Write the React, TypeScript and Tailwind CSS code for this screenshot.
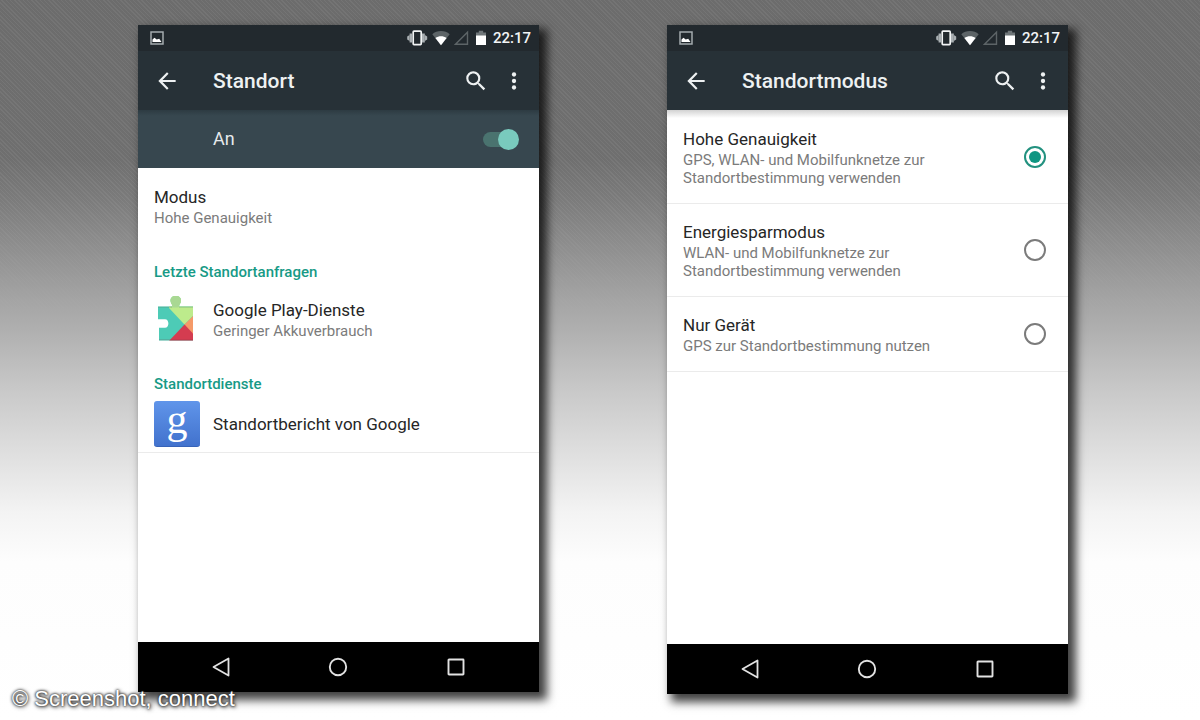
import { useState, type ReactNode } from "react";

function VibrateIcon() {
  return (
    <svg viewBox="0 0 21 16" className="h-4 w-[21px]" aria-hidden="true">
      <rect x="6.2" y="1.2" width="8" height="13.4" rx="0.8" fill="none" stroke="#f2f4f5" strokeWidth="1.700" />
      <path d="M2.600 3.600h2.800v8.800H2.600zM15 3.600h2.800v8.800H15z" fill="#aab0b3" />
      <path d="M.2 6.600 2.600 5v6L.2 9.400zM20.200 6.600 17.800 5v6l2.400-1.600z" fill="#aab0b3" />
    </svg>
  );
}

function WifiIcon() {
  return (
    <svg viewBox="0 0 18 16" className="h-4 w-[18px]" aria-hidden="true">
      <path d="M9 15.200.3 4.200C2.600 2.200 5.600 1 9 1s6.400 1.200 8.700 3.200z" fill="#5d6467" />
      <path d="M9 15.200 3.400 8C5 6.900 7 6.300 9 6.300s4 .6 5.600 1.700z" fill="#fff" />
    </svg>
  );
}

function SignalIcon() {
  return (
    <svg viewBox="0 0 15 16" className="h-4 w-[15px]" aria-hidden="true">
      <path d="M1.500 14.200h12V2.200z" fill="none" stroke="#5d6467" strokeWidth="1.400" />
    </svg>
  );
}

function BatteryIcon() {
  return (
    <svg viewBox="0 0 16 16" className="h-4 w-4" aria-hidden="true">
      <path d="M3 2.500h2.800V.8h4.400v1.700H13V6H3z" fill="#6f7679" />
      <path d="M3 5.500h10V15H3z" fill="#fff" />
    </svg>
  );
}

function StatusBar() {
  return (
    <div className="flex h-[26px] items-center gap-1 bg-[#22292e] pr-2 pl-3 text-[#f2f4f5]">
      <svg viewBox="0 0 14 14" className="h-[14px] w-[14px]" aria-hidden="true">
        <rect x="1" y="1" width="12" height="12" fill="none" stroke="#a4abae" strokeWidth="1.500" />
        <path d="M2.500 11V8.500l2-1.700 2.200 1.700 2.500-.8L11.500 11z" fill="#fff" />
      </svg>
      <div className="ml-auto flex items-center gap-1">
        <VibrateIcon />
        <WifiIcon />
        <SignalIcon />
        <BatteryIcon />
        <span className="text-[15px] leading-5 font-medium">22:17</span>
      </div>
    </div>
  );
}

function AppBar({ title }: { title: string }) {
  return (
    <header className="flex h-[59px] items-center bg-[#273137] pr-3 pl-4 text-[#eef1f2]">
      <div className="w-[59px]">
        <button type="button" aria-label="Zurück" className="block">
          <svg viewBox="0 0 24 24" className="h-[26px] w-[26px]" fill="currentColor" aria-hidden="true">
            <path d="M20 11H7.830l5.590-5.590L12 4l-8 8 8 8 1.410-1.410L7.830 13H20v-2z" />
          </svg>
        </button>
      </div>
      <h1 className="flex-1 text-[21px] leading-6 font-medium">{title}</h1>
      <div className="flex gap-3">
        <button type="button" aria-label="Suchen">
          <svg viewBox="0 0 24 24" className="h-[26px] w-[26px]" fill="currentColor" aria-hidden="true">
            <path d="M15.500 14h-.79l-.28-.27A6.471 6.471 0 0 0 16 9.500 6.500 6.500 0 1 0 9.500 16c1.610 0 3.090-.59 4.230-1.570l.27.280v.790l5 4.990L20.490 19l-4.990-5zm-6 0C7.010 14 5 11.990 5 9.500S7.010 5 9.500 5 14 7.010 14 9.500 11.990 14 9.500 14z" />
          </svg>
        </button>
        <button type="button" aria-label="Weitere Optionen">
          <svg viewBox="0 0 24 24" className="h-[26px] w-[26px]" fill="currentColor" aria-hidden="true">
            <circle cx="12" cy="6" r="2" />
            <circle cx="12" cy="12" r="2" />
            <circle cx="12" cy="18" r="2" />
          </svg>
        </button>
      </div>
    </header>
  );
}

function NavBar() {
  return (
    <nav className="grid h-[50px] grid-cols-3 items-center justify-items-center bg-black px-6">
      <button type="button" aria-label="Zurück">
        <svg viewBox="0 0 22 22" className="h-[22px] w-[22px]" fill="none" stroke="#e2e2e2" strokeWidth="1.800" aria-hidden="true">
          <path d="M18.500 2.500v17L3.500 11z" strokeLinejoin="round" />
        </svg>
      </button>
      <button type="button" aria-label="Startseite">
        <svg viewBox="0 0 22 22" className="h-[22px] w-[22px]" fill="none" stroke="#e2e2e2" strokeWidth="1.900" aria-hidden="true">
          <circle cx="11" cy="11" r="8.200" />
        </svg>
      </button>
      <button type="button" aria-label="Übersicht">
        <svg viewBox="0 0 22 22" className="h-[22px] w-[22px]" fill="none" stroke="#e2e2e2" strokeWidth="1.900" aria-hidden="true">
          <rect x="3.500" y="3.500" width="15" height="15" rx="0.500" />
        </svg>
      </button>
    </nav>
  );
}

function Phone({ title, children }: { title: string; children: ReactNode }) {
  return (
    <section className="flex flex-col bg-white shadow-[6px_6px_9px_2px_rgba(0,0,0,0.75)]">
      <StatusBar />
      <AppBar title={title} />
      {children}
      <NavBar />
    </section>
  );
}

function RowText({ title, detail }: { title: string; detail?: string }) {
  return (
    <span className="block">
      <span className="block text-[17px] leading-6 text-[#262626]">{title}</span>
      {detail && <span className="block text-[15px] leading-[18px] text-[#7b7b7b]">{detail}</span>}
    </span>
  );
}

function SectionTitle({ children }: { children: ReactNode }) {
  return (
    <h2 className="px-4 pt-6 pb-[7px] text-[15px] leading-[18px] font-medium text-[#179a86]">{children}</h2>
  );
}

function PlayServicesIcon() {
  return (
    <svg viewBox="0 0 46 46" className="h-[46px] w-[46px]" aria-hidden="true">
      <defs>
        <clipPath id="puzzle">
          <path d="M4 10.500h14.500c0-2-2-3-2-6.200A4.900 4.300 0 0 1 27 4.300c0 3.200-2 4.200-2 6.200H39V44.500H5V31.800h6c4.500 0 4.500-8.600 0-8.600H4z" />
        </clipPath>
      </defs>
      <g clipPath="url(#puzzle)">
        <path d="M0 0h46v46H0z" fill="#4dcbb6" />
        <path d="M15 0h24v20l-8.500 8.500L15 12z" fill="#bdeb8c" />
        <path d="M15 0h13v8.500l-4 3H17z" fill="#a9d893" />
        <path d="M39 20v24l-8.500-15.500z" fill="#f59a68" />
        <path d="M30.500 28.500 14 46h26v-7.500z" fill="#d43c50" />
        <path d="M4 10.500h14v1H4zM25 10.500h14v1H25z" fill="#5a8b72" opacity=".5" />
        <path d="M5 43.500h34v1H5z" fill="#7a3440" opacity=".35" />
      </g>
    </svg>
  );
}

function LocationScreen() {
  const [enabled, setEnabled] = useState(true);
  return (
    <Phone title="Standort">
      <label className="flex h-[58px] items-center bg-[#37474f] bg-linear-to-b from-[#2d3b42] to-transparent to-10% pr-5 pl-[75px]">
        <span className="flex-1 text-[18px] leading-6 text-[#e6eaec]">An</span>
        <input
          type="checkbox"
          role="switch"
          checked={enabled}
          onChange={(e) => setEnabled(e.target.checked)}
          className="relative h-[21px] w-9 appearance-none before:absolute before:top-[3px] before:left-0 before:h-[15px] before:w-8 before:rounded-full before:bg-[#4a736f] after:absolute after:top-0 after:left-0 after:h-[21px] after:w-[21px] after:rounded-full after:bg-[#eceff1] checked:after:left-[15px] checked:after:bg-[#79cabd]"
        />
      </label>
      <div className="min-h-[474px]">
        <button type="button" className="block w-full px-4 pt-[17px] pb-3 text-left">
          <RowText title="Modus" detail="Hohe Genauigkeit" />
        </button>
        <SectionTitle>Letzte Standortanfragen</SectionTitle>
        <button type="button" className="flex w-full items-center px-4 pt-2 pb-[9px] text-left">
          <span className="w-[59px]">
            <PlayServicesIcon />
          </span>
          <RowText title="Google Play-Dienste" detail="Geringer Akkuverbrauch" />
        </button>
        <SectionTitle>Standortdienste</SectionTitle>
        <button type="button" className="flex w-full items-center border-b border-[#ebebeb] px-4 pt-px pb-[5px] text-left">
          <span className="w-[59px]">
            <span className="flex h-[46px] w-[46px] justify-center rounded-[3px] border-b border-[#3763b8] bg-linear-to-b from-[#6095ea] to-[#4272cd] font-['Liberation_Serif',serif] text-[42px] leading-[36px] text-white">
              g
            </span>
          </span>
          <RowText title="Standortbericht von Google" />
        </button>
      </div>
    </Phone>
  );
}

const modes = [
  {
    id: "high",
    title: "Hohe Genauigkeit",
    detail: "GPS, WLAN- und Mobilfunknetze zur Standortbestimmung verwenden",
  },
  {
    id: "saving",
    title: "Energiesparmodus",
    detail: "WLAN- und Mobilfunknetze zur Standortbestimmung verwenden",
  },
  { id: "device", title: "Nur Gerät", detail: "GPS zur Standortbestimmung nutzen" },
];

function ModeScreen() {
  const [mode, setMode] = useState("high");
  return (
    <Phone title="Standortmodus">
      <div className="min-h-[534px] bg-linear-to-b from-[#d2d2d2] to-transparent to-[8px]">
        {modes.map((m) => (
          <label
            key={m.id}
            className="flex items-center justify-between border-b border-[#ebebeb] py-4 pr-[22px] pl-4 first:pt-[17px]"
          >
            <span className="max-w-[270px]">
              <RowText title={m.title} detail={m.detail} />
            </span>
            <input
              type="radio"
              name="mode"
              checked={mode === m.id}
              onChange={() => setMode(m.id)}
              className="grid h-[22px] w-[22px] appearance-none place-items-center rounded-full border-2 border-[#7b7b7b] before:h-3 before:w-3 before:rounded-full checked:border-[#22917f] checked:before:bg-[#0f9682]"
            />
          </label>
        ))}
      </div>
    </Phone>
  );
}

export default function App() {
  return (
    <main className="relative min-h-screen bg-[linear-gradient(to_bottom,#6c6c6c_0%,#6f6f6f_22%,#7c7c7c_28%,#a5a5a5_42%,#b0b0b0_46%,#c8c8c8_54%,#dfdfdf_63%,#f3f3f3_71%,#fdfdfd_78%,#ffffff_100%)] pt-[25px] pr-[11%] pb-6 pl-[11.5%] font-[Roboto,sans-serif]">
      <div className="absolute inset-x-0 top-0 h-[330px] bg-[repeating-linear-gradient(45deg,rgba(255,255,255,0.06)_0px,rgba(255,255,255,0.06)_1px,transparent_1px,transparent_3px)] mask-b-from-60% mask-b-to-100%" />
      <div className="relative grid grid-cols-2 items-start gap-x-32">
        <LocationScreen />
        <ModeScreen />
      </div>
      <p className="absolute bottom-2 left-3 font-['Liberation_Sans',sans-serif] text-[22px] leading-[26px] text-white [text-shadow:0_0_2px_#333,0_0_3px_#333,1px_1px_4px_#222]">
        © Screenshot, connect
      </p>
    </main>
  );
}
